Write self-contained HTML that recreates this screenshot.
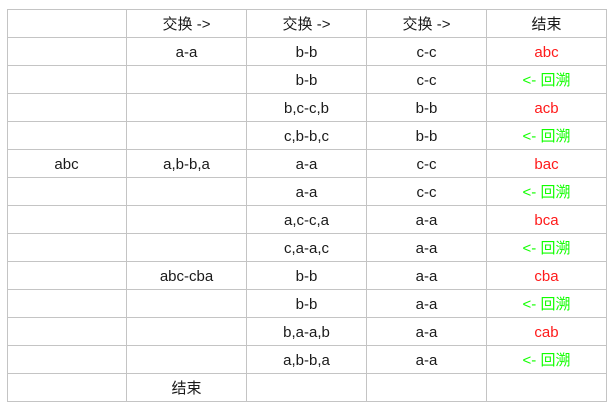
<!DOCTYPE html>
<html><head><meta charset="utf-8"><style>
html,body{margin:0;padding:0;background:#fff;width:610px;height:408px;overflow:hidden}
body{position:relative;font-family:"Liberation Sans","Noto Sans CJK SC",sans-serif;font-size:15px;color:#1a1a1a}
.v{position:absolute;top:9px;width:1px;height:393px;background:#c4c4c4}
.h{position:absolute;left:7px;width:600px;height:1px;background:#c4c4c4}
.c{position:absolute;width:119px;height:28px;line-height:28px;text-align:center;white-space:nowrap}
.r{color:#ff1a1a}.g{color:#11ff00}
</style></head><body>
<div class="v" style="left:7px"></div><div class="v" style="left:126px"></div><div class="v" style="left:246px"></div><div class="v" style="left:366px"></div><div class="v" style="left:486px"></div><div class="v" style="left:606px"></div>
<script>
for(let k=0;k<=14;k++){document.write('<div class="h" style="top:'+(9+28*k)+'px"></div>');}
const X=[7,127,247,367,487];
const rows=[
["","交换 ->","交换 ->","交换 ->","结束"],
["","a-a","b-b","c-c","r:abc"],
["","","b-b","c-c","g:<- 回溯"],
["","","b,c-c,b","b-b","r:acb"],
["","","c,b-b,c","b-b","g:<- 回溯"],
["abc","a,b-b,a","a-a","c-c","r:bac"],
["","","a-a","c-c","g:<- 回溯"],
["","","a,c-c,a","a-a","r:bca"],
["","","c,a-a,c","a-a","g:<- 回溯"],
["","abc-cba","b-b","a-a","r:cba"],
["","","b-b","a-a","g:<- 回溯"],
["","","b,a-a,b","a-a","r:cab"],
["","","a,b-b,a","a-a","g:<- 回溯"],
["","结束","","",""]];
rows.forEach((r,i)=>r.forEach((t,j)=>{if(!t)return;let cls="c";if(t.startsWith("r:")){cls+=" r";t=t.slice(2)}else if(t.startsWith("g:")){cls+=" g";t=t.slice(2)}
t=t.replace(/</g,"&lt;").replace(/>/g,"&gt;");
document.write('<div class="'+cls+'" style="left:'+X[j]+'px;top:'+(11+28*i)+'px">'+t+'</div>')}));
</script>
</body></html>
